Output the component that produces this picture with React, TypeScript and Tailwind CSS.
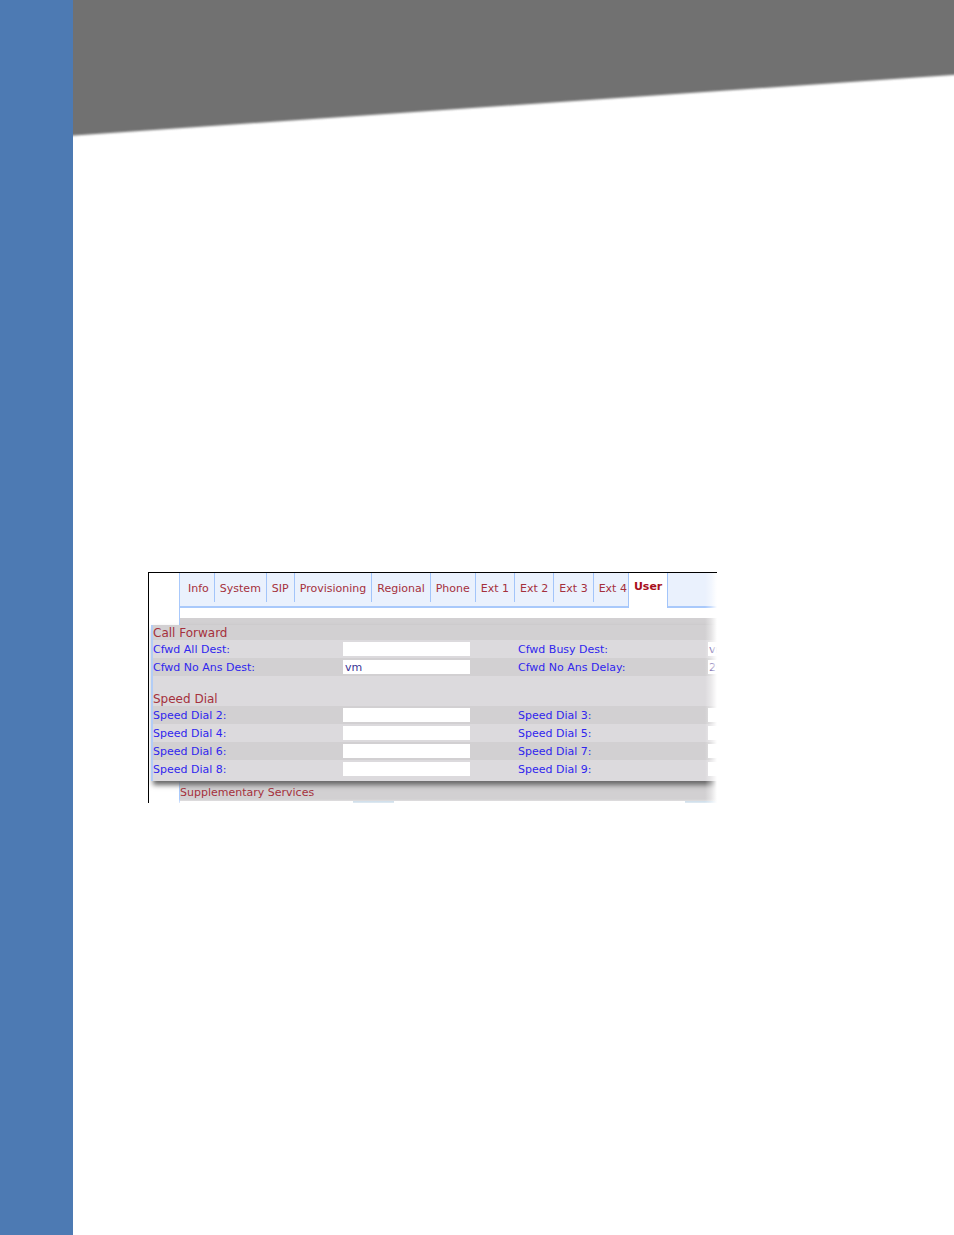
import React from "react";

const tabs = ["Info", "System", "SIP", "Provisioning", "Regional", "Phone", "Ext 1", "Ext 2", "Ext 3", "Ext 4"];

type Field = { label: string; value?: string };
type Row = [Field, Field];

const callForward: Row[] = [
  [{ label: "Cfwd All Dest:" }, { label: "Cfwd Busy Dest:", value: "vm" }],
  [{ label: "Cfwd No Ans Dest:", value: "vm" }, { label: "Cfwd No Ans Delay:", value: "20" }],
];

const speedDial: Row[] = [
  [{ label: "Speed Dial 2:" }, { label: "Speed Dial 3:" }],
  [{ label: "Speed Dial 4:" }, { label: "Speed Dial 5:" }],
  [{ label: "Speed Dial 6:" }, { label: "Speed Dial 7:" }],
  [{ label: "Speed Dial 8:" }, { label: "Speed Dial 9:" }],
];

function FieldCell({ field, last }: { field: Field; last?: boolean }) {
  return (
    <label className={last ? "flex min-w-0 flex-1 items-center" : "flex w-[365px] shrink-0 items-center"}>
      <span className="w-[190px] shrink-0 pt-0.5 whitespace-nowrap text-[#3026ee]">{field.label}</span>
      <input
        type="text"
        defaultValue={field.value ?? ""}
        className={
          last
            ? "h-3.5 w-[127px] min-w-0 bg-white pt-0.5 pl-px text-[11px] text-[#3a3494] outline-none"
            : "h-3.5 w-[127px] min-w-0 bg-white px-0.5 pt-0.5 text-[11px] text-[#3a3494] outline-none"
        }
      />
    </label>
  );
}

function Rows({ rows, darkFirst }: { rows: Row[]; darkFirst: boolean }) {
  return (
    <div>
      {rows.map((row, i) => (
        <div
          key={row[0].label}
          className={
            (i % 2 === 0) === darkFirst
              ? "flex h-[18px] items-center bg-[#d2d0d2]"
              : "flex h-[18px] items-center bg-[#dcdadd]"
          }
        >
          <FieldCell field={row[0]} />
          <FieldCell field={row[1]} last />
        </div>
      ))}
    </div>
  );
}

export default function App() {
  return (
    <div className="flex min-h-screen bg-white font-['DejaVu_Sans',sans-serif]">
      <aside className="w-[73px] shrink-0 bg-[#4d7ab3]" />
      <div className="min-w-0 flex-1">
        <header>
          <svg viewBox="0 0 881 142" preserveAspectRatio="none" className="block h-[142px] w-full" aria-hidden="true">
            <defs>
              <filter id="soft" x="-5%" y="-5%" width="110%" height="110%">
                <feGaussianBlur stdDeviation="0.4 1" />
              </filter>
            </defs>
            <polygon points="-20,-20 901,-20 901,73.5 -20,137" fill="#717171" filter="url(#soft)" />
          </svg>
        </header>
        <main className="px-[75px] pt-[430px]">
          <section className="relative w-full max-w-[569px] overflow-hidden border-t border-l border-black text-[11px]">
            <nav className="ml-[30px] flex h-[35px] border-l border-[#a9c9fb] bg-[#eaf1fd]">
              <div className="flex border-b-2 border-[#a9c9fb] pl-[3px]">
                {tabs.map((tab) => (
                  <a
                    key={tab}
                    href="#"
                    className="flex h-[29px] items-center border-r border-[#a3c5fa] px-[5px] pt-1 whitespace-nowrap text-[#a5303c] last:border-r-0 last:pr-px"
                  >
                    {tab}
                  </a>
                ))}
              </div>
              <a
                href="#"
                aria-current="page"
                className="flex items-center border-x border-[#a3c5fa] bg-white px-[5px] pb-1.5 font-bold text-[#a80f1c]"
              >
                User
              </a>
              <div className="flex-1 border-b-2 border-[#a9c9fb]" />
            </nav>
            <div className="ml-[30px] h-[10px] border-l border-[#a9c9fb] bg-white" />
            <div className="ml-[30px] h-[7px] border-l border-[#a9c9fb] bg-[#d2d0d2]" />
            <div className="relative ml-0.5 border-l-2 border-[#b3cdf6] bg-[#dcdadd] pb-[3px] shadow-[2px_4px_5px_0px_#686868]">
              <h2 className="flex h-[15px] items-center bg-[#d2d0d2] text-xs text-[#a5303c]">Call Forward</h2>
              <Rows rows={callForward} darkFirst={false} />
              <h2 className="mt-[14px] flex h-4 items-center pt-0.5 text-xs text-[#a5303c]">Speed Dial</h2>
              <Rows rows={speedDial} darkFirst />
            </div>
            <div className="ml-[30px] h-[22px] overflow-hidden border-l border-[#a9c9fb] bg-[#d2d0d2]">
              <h2 className="flex h-5 items-center pt-1 text-[#a5303c]">Supplementary Services</h2>
              <div className="flex h-0.5 bg-white pl-[173px]">
                <div className="w-[41px] bg-[#b5cde0]" />
                <div className="ml-[291px] flex-1 bg-[#b5cde0]" />
              </div>
            </div>
            <div className="absolute inset-y-0 right-0 w-3 bg-linear-to-r from-white/0 via-white/40 to-white" />
            <div className="absolute inset-x-0 bottom-0 h-1 bg-linear-to-b from-white/0 to-white/60" />
          </section>
        </main>
      </div>
    </div>
  );
}
